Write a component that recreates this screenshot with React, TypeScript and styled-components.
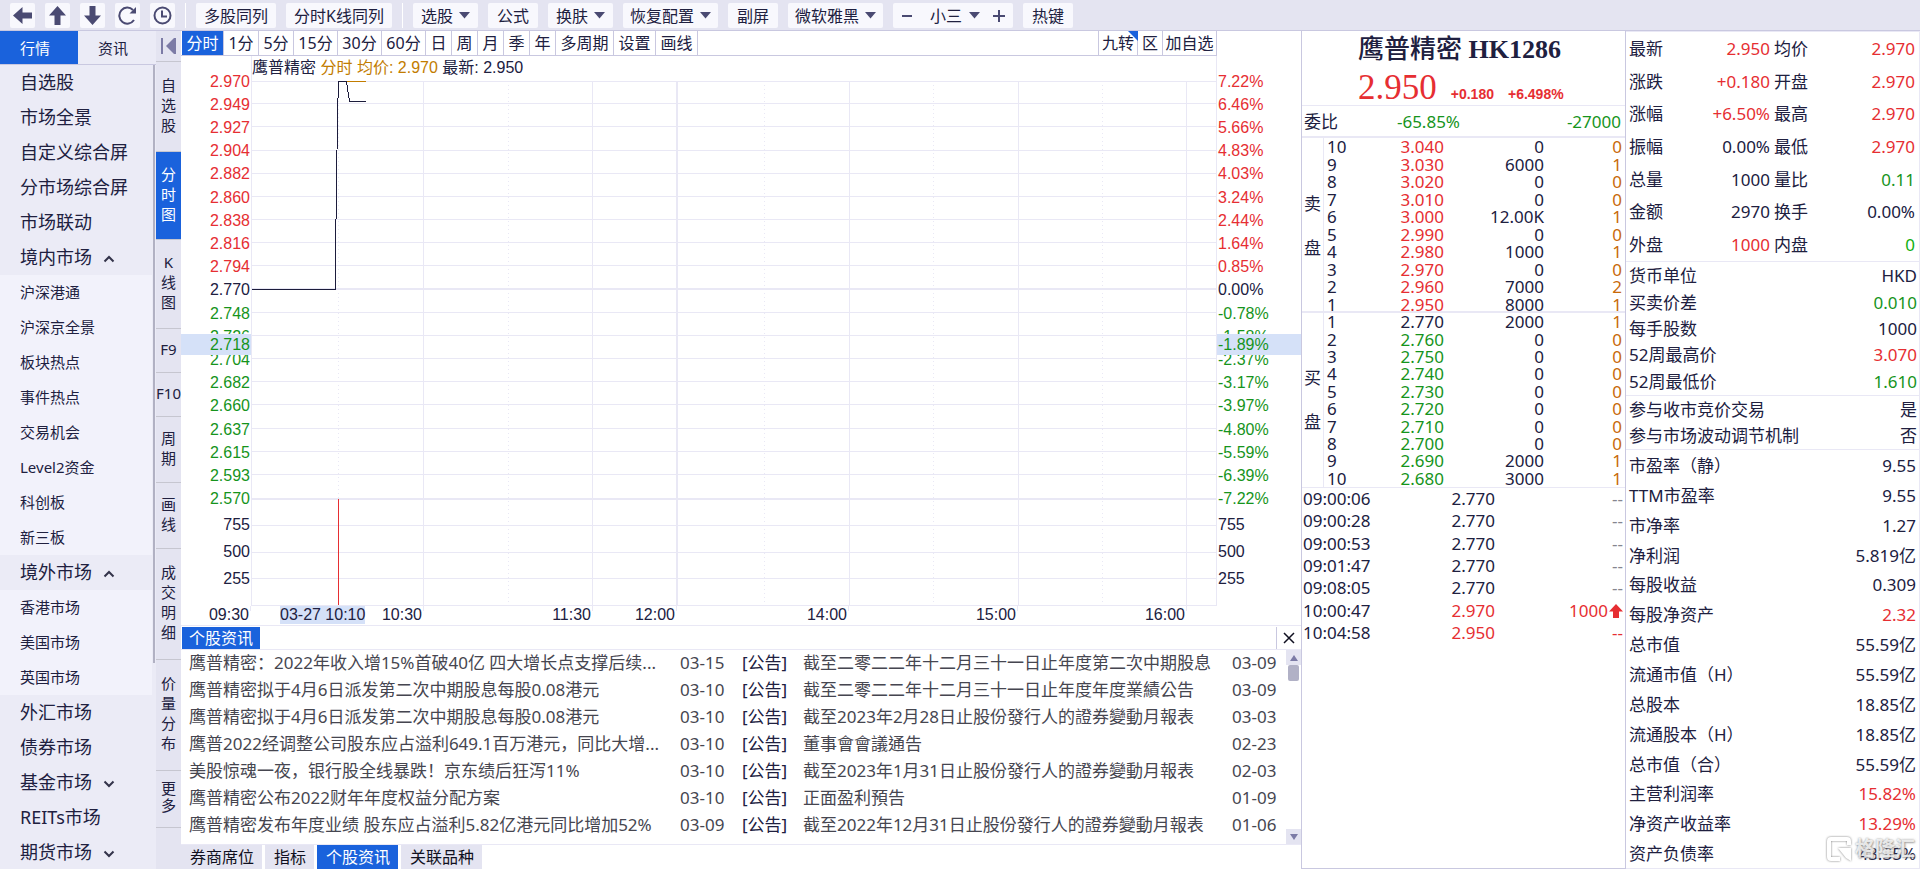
import React from "react";
import styled, { createGlobalStyle } from "styled-components";

const C = {
  ink: "#20203f",
  red: "#e62e32",
  green: "#16941c",
  orange: "#c8690a",
  amber: "#c27c00",
  blue: "#1a62dc",
  bar: "#e4e4f1",
  side: "#ebebf6",
  sub: "#f2f2fb",
  grid: "#e9e8f5",
  edge: "#c9c8e0",
  icon: "#4a4a72",
  mark: "#d5e1f8",
};
const UI = `"Noto Sans", "Noto Sans CJK SC", sans-serif`;
const AXIS = `"Liberation Sans", "Noto Sans CJK SC", sans-serif`;

const GlobalStyle = createGlobalStyle`
  *, *::before, *::after { box-sizing: border-box; }
  body { margin: 0; background: #fff; color: ${C.ink}; font: 16px/20px ${UI}; }
  button { border: 0; padding: 0; margin: 0; background: none; font: inherit; color: inherit; white-space: nowrap; cursor: pointer; }
  a { color: inherit; text-decoration: none; }
  svg { display: block; }
`;

const Page = styled.div`
  height: 100vh;
  display: flex;
  flex-direction: column;
  overflow: hidden;
`;
const Toolbar = styled.header`
  flex: none;
  height: 31px;
  padding: 3px 10px 2px;
  display: flex;
  gap: 10px;
  background: ${C.bar};
  border-bottom: 1px solid ${C.edge};
`;
const ToolButton = styled.button<{ $w: number }>`
  width: ${(p) => p.$w}px;
  height: 25px;
  display: flex;
  align-items: center;
  justify-content: center;
  gap: 6px;
  background: #f8f8fd;
  border-radius: 2px;
`;
const Stepper = styled.div`
  width: 120px;
  height: 25px;
  padding: 0 8px;
  display: flex;
  align-items: center;
  justify-content: space-between;
  background: #f8f8fd;
  border-radius: 2px;
`;
const StepSize = styled.button`
  padding-left: 4px;
  display: flex;
  align-items: center;
  gap: 7px;
`;
const Divider = styled.span`
  width: 1px;
  height: 25px;
  background: #fff;
`;
const Body = styled.div`
  flex: 1;
  min-height: 0;
  display: flex;
`;

/* ---------- market navigation ---------- */
const Sidebar = styled.aside`
  flex: none;
  width: 156px;
  background: ${C.side};
`;
const SideTabs = styled.div`
  height: 34px;
  display: flex;
  border-bottom: 1px solid ${C.edge};
  font-size: 15px;
`;
const SideTab = styled.button<{ $on?: boolean }>`
  flex: 1;
  padding-left: 20px;
  text-align: left;
  background: ${(p) => (p.$on ? C.blue : "transparent")};
  color: ${(p) => (p.$on ? "#fff" : C.ink)};
`;
const NavScroll = styled.nav`
  display: flex;
  justify-content: space-between;
  padding-right: 1px;
`;
const NavList = styled.div`
  width: 152px;
`;
const NavThumb = styled.span`
  width: 2px;
  height: 598px;
  background: #b1b1c3;
`;
const NavItem = styled.a<{ $sub?: boolean }>`
  height: 35px;
  padding: 0 0 2px 20px;
  display: flex;
  align-items: center;
  gap: 11px;
  font-size: ${(p) => (p.$sub ? 15 : 18)}px;
  background: ${(p) => (p.$sub ? C.sub : C.side)};
  svg {
    margin-top: 4px;
  }
`;

/* ---------- vertical view tabs ---------- */
const Rail = styled.div`
  flex: none;
  width: 25px;
  background: ${C.bar};
`;
const RailTab = styled.button<{ $h: number; $on?: boolean; $tight?: boolean }>`
  width: 25px;
  height: ${(p) => p.$h}px;
  padding-bottom: 4px;
  display: flex;
  flex-direction: column;
  align-items: center;
  justify-content: center;
  font-size: 15px;
  line-height: ${(p) => (p.$tight ? 17 : 20)}px;
  border-bottom: 1px solid #c6c6d0;
  background: ${(p) => (p.$on ? C.blue : "transparent")};
  color: ${(p) => (p.$on ? "#fff" : C.ink)};
`;
const Collapse = styled.button`
  width: 25px;
  height: 31px;
  display: grid;
  place-items: center;
  border-bottom: 1px solid #c6c6d0;
`;

/* ---------- chart ---------- */
const Center = styled.main`
  flex: 1;
  min-width: 0;
  display: flex;
  flex-direction: column;
`;
const ChartArea = styled.section`
  position: relative;
  flex: none;
  display: grid;
  grid-template-columns: 70px minmax(0, 1fr) 84px;
  grid-template-rows: 25px 550px 19px;
  border-bottom: 1px solid ${C.grid};
`;
const PeriodBar = styled.div`
  grid-column: 1 / 3;
  display: flex;
  padding-left: 1px;
  border-bottom: 1px solid ${C.edge};
`;
const Period = styled.button<{ $w: number; $on?: boolean }>`
  position: relative;
  width: ${(p) => p.$w}px;
  border-right: 1px solid ${C.edge};
  background: ${(p) => (p.$on ? C.blue : "#fff")};
  color: ${(p) => (p.$on ? "#fff" : C.ink)};
`;
const RightPeriods = styled.div`
  margin-left: auto;
  display: flex;
  border-left: 1px solid ${C.edge};
`;
const Corner = styled.svg`
  position: absolute;
  top: 0;
  right: -1px;
`;
const Axis = styled.div<{ $right?: boolean }>`
  grid-row: 2;
  grid-column: ${(p) => (p.$right ? 3 : 1)};
  padding: 14px 1px 0;
  font-family: ${AXIS};
  text-align: ${(p) => (p.$right ? "left" : "right")};
`;
const AxisBlock = styled.div<{ $h: number }>`
  height: ${(p) => p.$h}px;
  display: flex;
  flex-direction: column;
`;
const AxisLabel = styled.span<{ $c?: string }>`
  flex: 1;
  display: flex;
  flex-direction: column;
  justify-content: center;
  line-height: 18px;
  color: ${(p) => p.$c || C.ink};
`;
const PriceMark = styled.div<{ $right?: boolean }>`
  position: absolute;
  top: 303px;
  ${(p) => (p.$right ? "right: 0; width: 84px;" : "left: 0; width: 70px; text-align: right;")}
  height: 21px;
  padding: 0 1px;
  font-family: ${AXIS};
  line-height: 22px;
  background: ${C.mark};
  color: ${C.green};
`;
const Plot = styled.div`
  grid-row: 2;
  grid-column: 2;
  display: flex;
  flex-direction: column;
  border: solid ${C.grid};
  border-width: 0 1px 1px;
`;
const Legend = styled.div`
  height: 25px;
  font-family: ${AXIS};
  line-height: 24px;
  white-space: pre;
`;
const Amber = styled.span`
  color: ${C.amber};
`;
const PlotSvg = styled.svg`
  width: 100%;
  height: 524px;
`;
const TimeAxis = styled.div`
  grid-row: 3;
  grid-column: 1 / 3;
  display: grid;
  grid-template-columns: 70px 173fr 169fr 84fr 172fr 169fr 169fr 30fr;
  font-family: ${AXIS};
  line-height: 18px;
`;
const TimeCell = styled.span`
  padding-right: 2px;
  display: flex;
  justify-content: flex-end;
  background: linear-gradient(${C.grid}, ${C.grid}) right top / 1px 5px no-repeat;
`;
const TimeMark = styled.span`
  margin: 0 auto 0 29px;
  height: 18px;
  background: ${C.mark};
`;

/* ---------- news ---------- */
const News = styled.section`
  flex: 1;
  min-height: 0;
  display: flex;
  flex-direction: column;
  border-bottom: 1px solid ${C.grid};
`;
const NewsHead = styled.div`
  flex: none;
  height: 24px;
  padding: 1px 0 0 1px;
  display: flex;
  justify-content: space-between;
  border-bottom: 1px solid ${C.grid};
`;
const NewsTitle = styled.h2`
  margin: 0;
  width: 78px;
  font: 16px/22px ${UI};
  text-align: center;
  background: ${C.blue};
  color: #fff;
`;
const CloseButton = styled.button`
  width: 25px;
  display: grid;
  place-items: center;
  border-left: 1px solid ${C.edge};
`;
const NewsBody = styled.div`
  flex: 1;
  min-height: 0;
  display: flex;
`;
const NewsList = styled.div`
  flex: 1;
  min-width: 0;
  overflow: hidden;
  padding-left: 8px;
  font-size: 17px;
  color: #464650;
`;
const NewsRow = styled.div`
  height: 27px;
  display: grid;
  grid-template-columns: minmax(0, 491fr) 62px 61px minmax(0, 429fr) 54px;
  line-height: 26px;
  white-space: nowrap;
`;
const NewsLink = styled.a<{ lang?: string }>`
  padding-right: 20px;
  overflow: hidden;
  text-overflow: ellipsis;
  ${(p) => p.lang === "zh-TW" && `font-family: "Noto Sans", "Noto Sans CJK TC", sans-serif;`}
`;
const Tag = styled.span`
  color: ${C.ink};
`;
const ScrollTrack = styled.div`
  width: 15px;
  display: flex;
  flex-direction: column;
  align-items: center;
`;
const ScrollButton = styled.button`
  width: 15px;
  height: 15px;
  display: grid;
  place-items: center;
  background: ${C.bar};
`;
const ScrollThumb = styled.span`
  width: 11px;
  height: 16px;
  margin-bottom: auto;
  border-radius: 2px;
  background: #b1b1c6;
`;
const BottomTabs = styled.div`
  flex: none;
  height: 24px;
  display: flex;
  gap: 3px;
`;
const BottomTab = styled.button<{ $on?: boolean }>`
  padding: 0 8px 0 9px;
  background: ${(p) => (p.$on ? C.blue : C.bar)};
  color: ${(p) => (p.$on ? "#fff" : "#101020")};
`;

/* ---------- quote ---------- */
const Quote = styled.section`
  flex: none;
  width: 325px;
  border: solid ${C.edge};
  border-width: 0 1px 1px;
  font-size: 17px;
`;
const QuoteHead = styled.div`
  height: 74px;
  padding: 1px 0 0 56px;
`;
const StockName = styled.h1`
  margin: 0;
  font: bold 26px/36px "Liberation Serif", "Noto Sans CJK SC", serif;
`;
const CnName = styled.span`
  font-weight: 500;
`;
const PriceLine = styled.div`
  margin-top: 4px;
  display: flex;
  align-items: baseline;
  gap: 14px;
  color: ${C.red};
`;
const BigPrice = styled.span`
  font: 35px/32px "Liberation Serif", serif;
`;
const Change = styled.span`
  font: bold 14px/16px "Liberation Sans", sans-serif;
`;
const RatioRow = styled.div`
  height: 33px;
  padding: 1px 4px 0 2px;
  display: grid;
  grid-template-columns: 50px 106px 1fr;
  align-items: center;
  text-align: right;
  border-top: 1px solid ${C.grid};
  border-bottom: 2px solid ${C.grid};
  color: ${C.green};
`;
const RatioLabel = styled.span`
  text-align: left;
  color: ${C.ink};
`;
const Side = styled.div<{ $sell?: boolean }>`
  height: 175px;
  display: flex;
  background: ${(p) => (p.$sell ? `linear-gradient(${C.grid}, ${C.grid}) 0 100% / 100% 2px no-repeat` : "none")};
  border-bottom: ${(p) => (p.$sell ? "0" : `1px solid ${C.grid}`)};
`;
const SideLabel = styled.div`
  width: 22px;
  display: flex;
  flex-direction: column;
  align-items: center;
  justify-content: center;
  line-height: 44px;
  border-right: 1px solid ${C.grid};
`;
const Levels = styled.table`
  flex: 1;
  display: block;
  tbody {
    height: 100%;
    display: flex;
    flex-direction: column;
  }
  tr {
    flex: 1;
    display: grid;
    grid-template-columns: 28px 92px 100px 1fr;
    align-items: center;
  }
  td, th {
    padding: 0;
    font-weight: 400;
    line-height: 17px;
    text-align: right;
  }
  th {
    padding-left: 3px;
    text-align: left;
  }
  td:last-child {
    padding-right: 3px;
  }
`;
const Cell = styled.td<{ $c?: string }>`
  color: ${(p) => p.$c || C.ink};
`;
const Ticks = styled.table`
  display: block;
  height: 156px;
  tbody {
    height: 100%;
    display: flex;
    flex-direction: column;
  }
  tr {
    flex: 1;
    display: grid;
    grid-template-columns: 70px 122px 1fr;
    align-items: center;
    padding: 0 2px 0 1px;
  }
  td {
    padding: 0;
    text-align: right;
  }
  td:first-child {
    text-align: left;
  }
  td:last-child {
    display: flex;
    align-items: center;
    justify-content: flex-end;
    gap: 1px;
  }
`;

/* ---------- fundamentals ---------- */
const Facts = styled.section`
  position: relative;
  flex: none;
  width: 294px;
  border: solid ${C.grid};
  border-width: 1px 1px 1px 0;
  font-size: 17px;
`;
const FactGroup = styled.dl<{ $h: number; $pad: number }>`
  margin: 0;
  height: ${(p) => p.$h}px;
  padding: 1px ${(p) => p.$pad}px 0 3px;
  display: flex;
  flex-direction: column;
  border-bottom: 1px solid ${C.grid};
  &:last-of-type {
    border-bottom: 0;
  }
`;
const FactRow = styled.div`
  flex: 1;
  display: flex;
  align-items: center;
  justify-content: space-between;
`;
const FactPair = styled.div`
  flex: 1;
  display: grid;
  grid-template-columns: 36px 105px 38px 1fr;
  align-items: center;
  dt + dd + dt {
    text-align: right;
  }
`;
const Value = styled.dd<{ $c?: string }>`
  margin: 0;
  text-align: right;
  color: ${(p) => p.$c || C.ink};
`;
const Watermark = styled.div`
  position: absolute;
  right: 4px;
  bottom: 5px;
  display: flex;
  align-items: center;
  gap: 4px;
  font-size: 20px;
  line-height: 28px;
  font-weight: 700;
  color: rgba(255, 255, 255, 0.8);
  text-shadow: 0 0 2px rgba(110, 110, 110, 0.7), 1px 1px 2px rgba(110, 110, 110, 0.5);
`;
const MarkSvg = styled.svg`
  filter: drop-shadow(0 0 1px rgba(110, 110, 110, 0.9));
`;

const Caret = () => (
  <svg width="11" height="7" viewBox="0 0 11 7"><path d="M0 0h11L5.500 6.500z" fill={C.icon} /></svg>
);
const Arrow = ({ turn }: { turn: number }) => (
  <svg width="19" height="19" viewBox="0 0 19 19">
    <path transform={`rotate(${turn} 9.500 9.500)`} d="M9.500 0L18 9.500H12.500V19H6.500V9.500H1z" fill={C.icon} />
  </svg>
);
const Chevron = ({ up }: { up?: boolean }) => (
  <svg width="12" height="8" viewBox="0 0 12 8">
    <path d={up ? "M1.500 6.500L6 2l4.500 4.500" : "M1.500 1.500L6 6l4.500-4.500"} fill="none" stroke="#33334a" strokeWidth="2" />
  </svg>
);

const NAV: [string, string?][] = [
  ["自选股"], ["市场全景"], ["自定义综合屏"], ["分市场综合屏"], ["市场联动"], ["境内市场", "up"],
  ["沪深港通", "sub"], ["沪深京全景", "sub"], ["板块热点", "sub"], ["事件热点", "sub"], ["交易机会", "sub"],
  ["Level2资金", "sub"], ["科创板", "sub"], ["新三板", "sub"], ["境外市场", "up"], ["香港市场", "sub"],
  ["美国市场", "sub"], ["英国市场", "sub"], ["外汇市场"], ["债券市场"], ["基金市场", "down"], ["REITs市场"], ["期货市场", "down"],
];
const RAIL: [string[], number][] = [
  [["自", "选", "股"], 90], [["分", "时", "图"], 88], [["K", "线", "图"], 89], [["F9"], 44], [["F10"], 44],
  [["周", "期"], 66], [["画", "线"], 66], [["成", "交", "明", "细"], 111], [["价", "量", "分", "布"], 111], [["更", "多"], 57],
];
const PERIODS: [string, number][] = [
  ["分时", 42], ["1分", 35], ["5分", 35], ["15分", 44], ["30分", 44], ["60分", 44], ["日", 26], ["周", 26],
  ["月", 26], ["季", 26], ["年", 26], ["多周期", 58], ["设置", 42], ["画线", 42],
];
const PRICES = ["2.970", "2.949", "2.927", "2.904", "2.882", "2.860", "2.838", "2.816", "2.794", "2.770", "2.748", "2.726", "2.704", "2.682", "2.660", "2.637", "2.615", "2.593", "2.570"];
const PERCENTS = ["7.22%", "6.46%", "5.66%", "4.83%", "4.03%", "3.24%", "2.44%", "1.64%", "0.85%", "0.00%", "-0.78%", "-1.58%", "-2.37%", "-3.17%", "-3.97%", "-4.80%", "-5.59%", "-6.39%", "-7.22%"];
const VOLUMES = ["755", "500", "255"];
const H_LINES = [0, 22, 45, 69, 92, 115, 138, 161, 184, 231, 254, 277, 300, 323, 347, 370, 393, 444, 471, 497];
const V_LINES = [171, 340, 597, 766, 934];
const V_DOTS = [86, 256, 512, 681, 850];
const NEWS: [string, string, string, string][] = [
  ["鹰普精密：2022年收入增15%首破40亿 四大增长点支撑后续...", "03-15", "截至二零二二年十二月三十一日止年度第二次中期股息", "03-09"],
  ["鹰普精密拟于4月6日派发第二次中期股息每股0.08港元", "03-10", "截至二零二二年十二月三十一日止年度年度業績公告", "03-09"],
  ["鹰普精密拟于4月6日派发第二次中期股息每股0.08港元", "03-10", "截至2023年2月28日止股份發行人的證券變動月報表", "03-03"],
  ["鹰普2022经调整公司股东应占溢利649.1百万港元，同比大增...", "03-10", "董事會會議通告", "02-23"],
  ["美股惊魂一夜，银行股全线暴跌！京东绩后狂泻11%", "03-10", "截至2023年1月31日止股份發行人的證券變動月報表", "02-03"],
  ["鹰普精密公布2022财年年度权益分配方案", "03-10", "正面盈利預告", "01-09"],
  ["鹰普精密发布年度业绩 股东应占溢利5.82亿港元同比增加52%", "03-09", "截至2022年12月31日止股份發行人的證券變動月報表", "01-06"],
];
const SELL: [string, string, string, string][] = [
  ["10", "3.040", "0", "0"], ["9", "3.030", "6000", "1"], ["8", "3.020", "0", "0"], ["7", "3.010", "0", "0"],
  ["6", "3.000", "12.00K", "1"], ["5", "2.990", "0", "0"], ["4", "2.980", "1000", "1"], ["3", "2.970", "0", "0"],
  ["2", "2.960", "7000", "2"], ["1", "2.950", "8000", "1"],
];
const BUY: [string, string, string, string][] = [
  ["1", "2.770", "2000", "1"], ["2", "2.760", "0", "0"], ["3", "2.750", "0", "0"], ["4", "2.740", "0", "0"],
  ["5", "2.730", "0", "0"], ["6", "2.720", "0", "0"], ["7", "2.710", "0", "0"], ["8", "2.700", "0", "0"],
  ["9", "2.690", "2000", "1"], ["10", "2.680", "3000", "1"],
];
const TRADES: [string, string, string, boolean?][] = [
  ["09:00:06", "2.770", "--"], ["09:00:28", "2.770", "--"], ["09:00:53", "2.770", "--"], ["09:01:47", "2.770", "--"],
  ["09:08:05", "2.770", "--"], ["10:00:47", "2.970", "1000", true], ["10:04:58", "2.950", "--", true],
];
const PAIRS: [string, string, string | undefined, string, string, string | undefined][] = [
  ["最新", "2.950", C.red, "均价", "2.970", C.red],
  ["涨跌", "+0.180", C.red, "开盘", "2.970", C.red],
  ["涨幅", "+6.50%", C.red, "最高", "2.970", C.red],
  ["振幅", "0.00%", undefined, "最低", "2.970", C.red],
  ["总量", "1000", undefined, "量比", "0.11", C.green],
  ["金额", "2970", undefined, "换手", "0.00%", undefined],
  ["外盘", "1000", C.red, "内盘", "0", "#10b010"],
];
type Fact = [string, string, string?];
const BASICS: Fact[] = [["货币单位", "HKD"], ["买卖价差", "0.010", C.green], ["每手股数", "1000"], ["52周最高价", "3.070", C.red], ["52周最低价", "1.610", C.green]];
const RULES: Fact[] = [["参与收市竞价交易", "是"], ["参与市场波动调节机制", "否"]];
const RATIOS: Fact[] = [
  ["市盈率（静）", "9.55"], ["TTM市盈率", "9.55"], ["市净率", "1.27"], ["净利润", "5.819亿"], ["每股收益", "0.309"],
  ["每股净资产", "2.32", C.red], ["总市值", "55.59亿"], ["流通市值（H）", "55.59亿"], ["总股本", "18.85亿"],
  ["流通股本（H）", "18.85亿"], ["总市值（合）", "55.59亿"], ["主营利润率", "15.82%", C.red], ["净资产收益率", "13.29%", C.red], ["资产负债率", "43.35%"],
];

const tone = (i: number) => (i < 9 ? C.red : i === 9 ? C.ink : C.green);

function AxisColumn({ labels, right }: { labels: string[]; right?: boolean }) {
  return (
    <Axis $right={right}>
      <AxisBlock $h={441}>{labels.map((t, i) => <AxisLabel key={t} $c={tone(i)}>{t}</AxisLabel>)}</AxisBlock>
      <AxisBlock $h={81}>{VOLUMES.map((t) => <AxisLabel key={t}>{t}</AxisLabel>)}</AxisBlock>
    </Axis>
  );
}

function BookSide({ label, rows, sell }: { label: string; rows: typeof SELL; sell?: boolean }) {
  return (
    <Side $sell={sell}>
      <SideLabel>{[...label].map((ch) => <span key={ch}>{ch}</span>)}</SideLabel>
      <Levels aria-label={label}>
        <tbody>
          {rows.map(([n, price, qty, count]) => (
            <tr key={n}>
              <th scope="row">{n}</th>
              <Cell $c={sell ? C.red : price === "2.770" ? C.ink : C.green}>{price}</Cell>
              <Cell>{qty}</Cell>
              <Cell $c={C.orange}>{count}</Cell>
            </tr>
          ))}
        </tbody>
      </Levels>
    </Side>
  );
}

function FactList({ rows, height, pad }: { rows: Fact[]; height: number; pad: number }) {
  return (
    <FactGroup $h={height} $pad={pad}>
      {rows.map(([k, v, c]) => <FactRow key={k}><dt>{k}</dt><Value $c={c}>{v}</Value></FactRow>)}
    </FactGroup>
  );
}

export default function App() {
  return (
    <Page lang="zh-CN">
      <GlobalStyle />
      <Toolbar>
        <ToolButton $w={25} aria-label="后退"><Arrow turn={-90} /></ToolButton>
        <ToolButton $w={25} aria-label="向上"><Arrow turn={0} /></ToolButton>
        <ToolButton $w={25} aria-label="向下"><Arrow turn={180} /></ToolButton>
        <ToolButton $w={25} aria-label="刷新">
          <svg width="19" height="19" viewBox="0 0 19 19" fill="none" stroke={C.icon} strokeWidth="2">
            <path d="M16 14A8 8 0 1 1 15 4" /><path d="M18 1V7.500H11.500z" fill={C.icon} stroke="none" />
          </svg>
        </ToolButton>
        <ToolButton $w={25} aria-label="历史">
          <svg width="19" height="19" viewBox="0 0 19 19" fill="none" stroke={C.icon} strokeWidth="2">
            <circle cx="9.500" cy="9.500" r="8" /><path d="M9 4.500V10.500H14" />
          </svg>
        </ToolButton>
        <Divider />
        <ToolButton $w={80}>多股同列</ToolButton>
        <ToolButton $w={106}>分时K线同列</ToolButton>
        <Divider />
        <ToolButton $w={65}>选股<Caret /></ToolButton>
        <ToolButton $w={50}>公式</ToolButton>
        <ToolButton $w={65}>换肤<Caret /></ToolButton>
        <ToolButton $w={95}>恢复配置<Caret /></ToolButton>
        <ToolButton $w={50}>副屏</ToolButton>
        <ToolButton $w={95}>微软雅黑<Caret /></ToolButton>
        <Stepper>
          <button aria-label="减小字号"><svg width="12" height="12" viewBox="0 0 12 12"><path d="M1 5h10v2H1z" fill={C.icon} /></svg></button>
          <StepSize>小三<Caret /></StepSize>
          <button aria-label="增大字号"><svg width="12" height="12" viewBox="0 0 12 12"><path d="M0 5h5V0h2v5h5v2H7v5H5V7H0z" fill={C.icon} /></svg></button>
        </Stepper>
        <ToolButton $w={50}>热键</ToolButton>
      </Toolbar>

      <Body>
        <Sidebar>
          <SideTabs><SideTab $on>行情</SideTab><SideTab>资讯</SideTab></SideTabs>
          <NavScroll>
            <NavList>
              {NAV.map(([t, k]) => (
                <NavItem key={t} href="#" $sub={k === "sub"}>
                  {t}{(k === "up" || k === "down") && <Chevron up={k === "up"} />}
                </NavItem>
              ))}
            </NavList>
            <NavThumb />
          </NavScroll>
        </Sidebar>

        <Rail>
          <Collapse aria-label="收起">
            <svg width="17" height="16" viewBox="0 0 17 16"><path d="M1 0h2v16H1zM14 0h2v16h-2L6 8z" fill="#7c7ba6" /></svg>
          </Collapse>
          {RAIL.map(([chars, h], i) => (
            <RailTab key={i} $h={h} $on={i === 1} $tight={i === 9}>{chars.map((ch) => <span key={ch}>{ch}</span>)}</RailTab>
          ))}
        </Rail>

        <Center>
          <ChartArea>
            <PeriodBar>
              {PERIODS.map(([t, w], i) => <Period key={t} $w={w} $on={i === 0}>{t}</Period>)}
              <RightPeriods>
                <Period $w={39}>九转<Corner width="10" height="10" viewBox="0 0 10 10"><path d="M0 0h10v10z" fill={C.blue} /></Corner></Period>
                <Period $w={25}>区</Period>
                <Period $w={54}>加自选</Period>
              </RightPeriods>
            </PeriodBar>
            <AxisColumn labels={PRICES} />
            <Plot>
              <Legend>鹰普精密 <Amber>分时 均价: 2.970</Amber> 最新: 2.950</Legend>
              <PlotSvg viewBox="0 0 964 524" preserveAspectRatio="none" shapeRendering="crispEdges">
                {H_LINES.map((y) => <rect key={y} x="0" y={y} width="964" height="1" fill={C.grid} />)}
                <rect x="0" y="207" width="964" height="2" fill={C.grid} />
                <rect x="0" y="417" width="964" height="2" fill={C.grid} />
                {V_LINES.map((x) => <rect key={x} x={x} y="0" width="1" height="524" fill={C.grid} />)}
                <rect x="424" y="0" width="2" height="524" fill={C.grid} />
                {V_DOTS.map((x) => <path key={x} d={`M${x} 4V524`} stroke={C.grid} strokeDasharray="1 3" transform="translate(0.500 0)" />)}
                <path d="M87 0.500H114" stroke={C.amber} fill="none" />
                <path d="M0 208.500H83.500V174L84.500 104L85.500 35L86.500 0.500H94.500L97.500 20.500H114" stroke="#1c1c3c" fill="none" />
                <rect x="86" y="418" width="1" height="106" fill={C.red} />
              </PlotSvg>
            </Plot>
            <AxisColumn labels={PERCENTS} right />
            <TimeAxis>
              <TimeCell>09:30</TimeCell>
              <TimeCell><TimeMark>03-27 10:10</TimeMark>10:30</TimeCell>
              <TimeCell>11:30</TimeCell>
              <TimeCell>12:00</TimeCell>
              <TimeCell>14:00</TimeCell>
              <TimeCell>15:00</TimeCell>
              <TimeCell>16:00</TimeCell>
            </TimeAxis>
            <PriceMark>2.718</PriceMark>
            <PriceMark $right>-1.89%</PriceMark>
          </ChartArea>

          <News>
            <NewsHead>
              <NewsTitle>个股资讯</NewsTitle>
              <CloseButton aria-label="关闭">
                <svg width="12" height="12" viewBox="0 0 12 12"><path d="M1 1l10 10M11 1L1 11" stroke="#101020" strokeWidth="1.500" /></svg>
              </CloseButton>
            </NewsHead>
            <NewsBody>
              <NewsList>
                {NEWS.map(([a, d1, b, d2], i) => (
                  <NewsRow key={i}>
                    <NewsLink href="#">{a}</NewsLink>
                    <span>{d1}</span>
                    <Tag>[公告]</Tag>
                    <NewsLink href="#" lang="zh-TW">{b}</NewsLink>
                    <span>{d2}</span>
                  </NewsRow>
                ))}
              </NewsList>
              <ScrollTrack>
                <ScrollButton aria-label="向上滚动"><svg width="8" height="6" viewBox="0 0 8 6"><path d="M4 0l4 6H0z" fill="#7c7ba6" /></svg></ScrollButton>
                <ScrollThumb />
                <ScrollButton aria-label="向下滚动"><svg width="8" height="6" viewBox="0 0 8 6"><path d="M0 0h8L4 6z" fill="#7c7ba6" /></svg></ScrollButton>
              </ScrollTrack>
            </NewsBody>
          </News>
          <BottomTabs>
            <BottomTab>券商席位</BottomTab>
            <BottomTab>指标</BottomTab>
            <BottomTab $on>个股资讯</BottomTab>
            <BottomTab>关联品种</BottomTab>
          </BottomTabs>
        </Center>

        <Quote>
          <QuoteHead>
            <StockName><CnName>鹰普精密</CnName> HK1286</StockName>
            <PriceLine>
              <BigPrice>2.950</BigPrice>
              <Change>+0.180</Change>
              <Change>+6.498%</Change>
            </PriceLine>
          </QuoteHead>
          <RatioRow><RatioLabel>委比</RatioLabel><span>-65.85%</span><span>-27000</span></RatioRow>
          <BookSide label="卖盘" rows={SELL} sell />
          <BookSide label="买盘" rows={BUY} />
          <Ticks>
            <tbody>
              {TRADES.map(([t, p, v, up]) => (
                <tr key={t}>
                  <Cell>{t}</Cell>
                  <Cell $c={up ? C.red : C.ink}>{p}</Cell>
                  <Cell $c={up ? C.red : "#85858f"}>
                    {v}
                    {v !== "--" && <svg width="14" height="14" viewBox="0 0 14 14"><path d="M7 0l7 7.500H10V14H4V7.500H0z" fill={C.red} /></svg>}
                  </Cell>
                </tr>
              ))}
            </tbody>
          </Ticks>
        </Quote>

        <Facts>
          <FactGroup $h={230} $pad={4}>
            {PAIRS.map(([k1, v1, c1, k2, v2, c2]) => (
              <FactPair key={k1}>
                <dt>{k1}</dt><Value $c={c1}>{v1}</Value>
                <dt>{k2}</dt><Value $c={c2}>{v2}</Value>
              </FactPair>
            ))}
          </FactGroup>
          <FactList rows={BASICS} height={134} pad={2} />
          <FactList rows={RULES} height={54} pad={2} />
          <FactList rows={RATIOS} height={419} pad={3} />
          <Watermark>
            <MarkSvg width="24" height="24" viewBox="0 0 24 24" fill="none" stroke="#fff" strokeWidth="4">
              <path d="M22 8V4a2 2 0 0 0-2-2H4a2 2 0 0 0-2 2v16a2 2 0 0 0 2 2h9" />
              <path d="M11 11h13v13l-5-3z" fill="#fff" stroke="none" />
            </MarkSvg>
            格隆汇
          </Watermark>
        </Facts>
      </Body>
    </Page>
  );
}
